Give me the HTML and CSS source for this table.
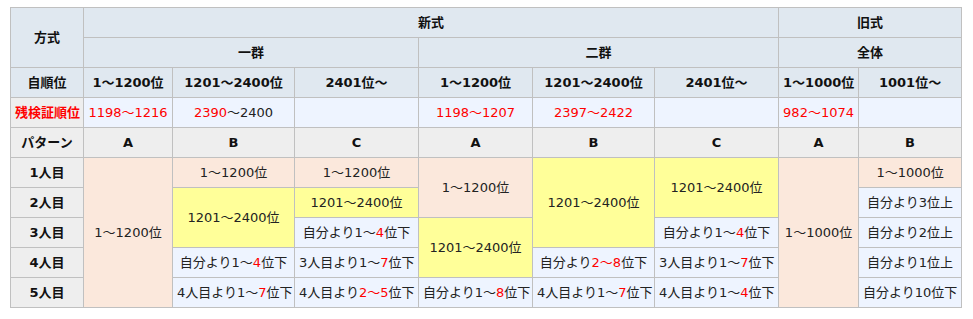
FILE: index.html
```html
<!DOCTYPE html>
<html lang="ja">
<head>
<meta charset="utf-8">
<link rel="stylesheet" href="styles.css">
</head>
<body>
<table class="tbl">
<colgroup>
<col class="c1"><col class="c2"><col class="c3"><col class="c4"><col class="c5"><col class="c6"><col class="c7"><col class="c8"><col class="c9">
</colgroup>
<tr class="hd">
<th rowspan="2">方式</th><th colspan="6">新式</th><th colspan="2">旧式</th>
</tr>
<tr class="hd">
<th colspan="3">一群</th><th colspan="3">二群</th><th colspan="2">全体</th>
</tr>
<tr class="hd">
<th>自順位</th><th>1～1200位</th><th>1201～2400位</th><th>2401位～</th><th>1～1200位</th><th>1201～2400位</th><th>2401位～</th><th>1～1000位</th><th>1001位～</th>
</tr>
<tr class="rem">
<th class="red lab">残検証順位</th><td class="red">1198～1216</td><td><span class="red">2390</span>～2400</td><td></td><td class="red">1198～1207</td><td class="red">2397～2422</td><td></td><td class="red">982～1074</td><td></td>
</tr>
<tr class="pat">
<th>パターン</th><th>A</th><th>B</th><th>C</th><th>A</th><th>B</th><th>C</th><th>A</th><th>B</th>
</tr>
<tr>
<th class="lab">1人目</th>
<td rowspan="5" class="pk">1～1200位</td>
<td class="pk">1～1200位</td>
<td class="pk">1～1200位</td>
<td rowspan="2" class="pk">1～1200位</td>
<td rowspan="3" class="yl">1201～2400位</td>
<td rowspan="2" class="yl">1201～2400位</td>
<td rowspan="5" class="pk">1～1000位</td>
<td class="pk">1～1000位</td>
</tr>
<tr>
<th class="lab">2人目</th>
<td rowspan="2" class="yl">1201～2400位</td>
<td class="yl">1201～2400位</td>
<td class="bl">自分より3位上</td>
</tr>
<tr>
<th class="lab">3人目</th>
<td class="bl">自分より1～<span class="red">4</span>位下</td>
<td rowspan="2" class="yl">1201～2400位</td>
<td class="bl">自分より1～<span class="red">4</span>位下</td>
<td class="bl">自分より2位上</td>
</tr>
<tr>
<th class="lab">4人目</th>
<td class="bl">自分より1～<span class="red">4</span>位下</td>
<td class="bl">3人目より1～<span class="red">7</span>位下</td>
<td class="bl">自分より<span class="red">2～8</span>位下</td>
<td class="bl">3人目より1～<span class="red">7</span>位下</td>
<td class="bl">自分より1位上</td>
</tr>
<tr>
<th class="lab">5人目</th>
<td class="bl">4人目より1～<span class="red">7</span>位下</td>
<td class="bl">4人目より<span class="red">2～5</span>位下</td>
<td class="bl">自分より1～<span class="red">8</span>位下</td>
<td class="bl">4人目より1～<span class="red">7</span>位下</td>
<td class="bl">4人目より1～<span class="red">4</span>位下</td>
<td class="bl">自分より10位下</td>
</tr>
</table>
</body>
</html>
```

FILE: styles.css
```css
html, body {
  margin: 0;
  padding: 0;
  background: #ffffff;
}
body {
  padding: 7px 10px;
  font-family: "DejaVu Sans", "Noto Sans CJK JP", sans-serif;
  font-size: 13px;
  color: #222;
}
.tbl {
  border-collapse: collapse;
  table-layout: fixed;
  width: 952px;
}
.c1 { width: 73px; }
.c2 { width: 89px; }
.c3 { width: 122px; }
.c4 { width: 124px; }
.c5 { width: 114px; }
.c6 { width: 122px; }
.c7 { width: 124px; }
.c8 { width: 80px; }
.c9 { width: 103px; }
.tbl th, .tbl td {
  border: 1px solid #c0c0c0;
  height: 29px;
  padding: 0 4px;
  text-align: center;
  vertical-align: middle;
  line-height: 18px;
  white-space: nowrap;
  overflow: hidden;
}
.tbl th {
  font-weight: bold;
  color: #111;
}
.hd th { background: #e0e8f0; }
.rem td { background: #eef4ff; }
.rem th { background: #efefef; }
.pat th { background: #eeeeee; }
.tbl .lab { background: #eeeeee; }
.tbl .red { color: #ff0000; }
.pk { background: #fbe8dc; }
.yl { background: #ffff99; }
.bl { background: #eef4ff; }
```
